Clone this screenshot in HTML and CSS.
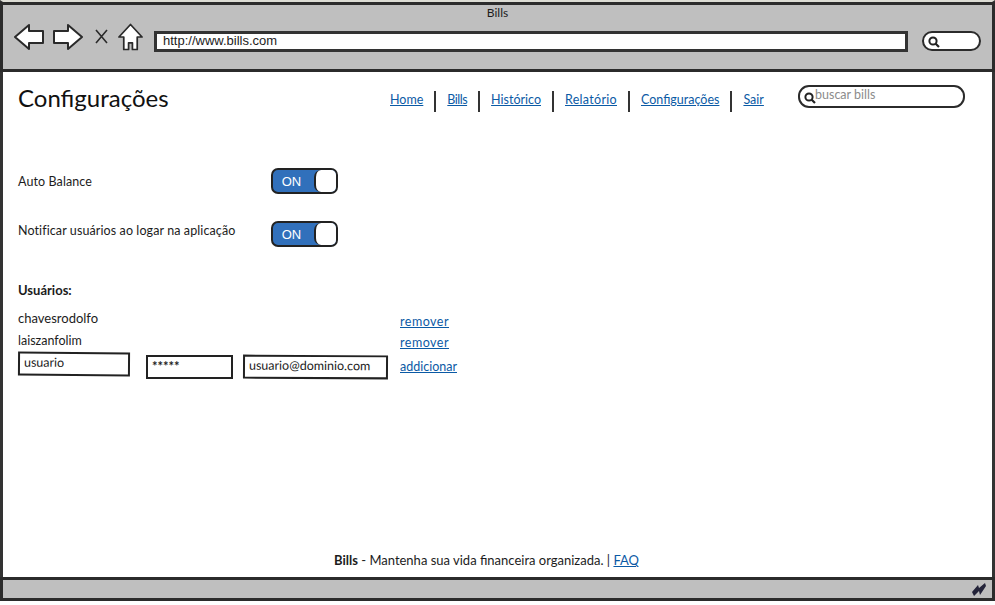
FILE: index.html
```html
<!DOCTYPE html>
<html lang="pt">
<head>
  <meta charset="UTF-8">
  <title>Bills</title>
  <meta name="viewport" content="width=device-width,initial-scale=1">
  <link rel="stylesheet" href="styles.css">
</head>
<body>
  <div class="window">
    <div class="chrome">
      <div class="chrome-title">Bills</div>
      <div class="chrome-tools">
        <svg class="nav-icon" width="30" height="28" viewBox="0 0 30 28">
          <path d="M1 14 L15 2 L15 8 L29 8 L29 20 L15 20 L15 26 Z" fill="#fff" stroke="#2a2a2a" stroke-width="2" stroke-linejoin="round"/>
        </svg>
        <svg class="nav-icon forward" width="30" height="28" viewBox="0 0 30 28">
          <path d="M29 14 L15 2 L15 8 L1 8 L1 20 L15 20 L15 26 Z" fill="#fff" stroke="#2a2a2a" stroke-width="2" stroke-linejoin="round"/>
        </svg>
        <svg class="stop-icon" width="13" height="15" viewBox="0 0 13 15">
          <path d="M1 1 L12 14 M12 1 L1 14" fill="none" stroke="#2a2a2a" stroke-width="1.6"/>
        </svg>
        <svg class="home-icon" width="25" height="28" viewBox="0 0 26 28">
          <path d="M13 1 L25 14 L20 14 L20 27 L15 27 L15 20 L11 20 L11 27 L6 27 L6 14 L1 14 Z" fill="#fff" stroke="#2a2a2a" stroke-width="1.8" stroke-linejoin="round"/>
        </svg>
        <div class="url-bar">http://www.bills.com</div>
        <div class="chrome-search">
          <svg width="12" height="12" viewBox="0 0 12 12">
            <circle cx="5" cy="5" r="3.6" fill="none" stroke="#222" stroke-width="2"/>
            <path d="M7.5 7.5 L11 11" stroke="#222" stroke-width="2.2"/>
          </svg>
        </div>
      </div>
    </div>

    <div class="content">
      <header class="page-head">
        <h1>Configurações</h1>
        <nav class="main-nav">
          <a href="#">Home</a>
          <a href="#" class="tight">Bills</a>
          <a href="#">Histórico</a>
          <a href="#" class="wide">Relatório</a>
          <a href="#">Configurações</a>
          <a href="#">Sair</a>
        </nav>
        <div class="search-box">
          <svg width="12" height="12" viewBox="0 0 12 12">
            <circle cx="5" cy="5" r="3.6" fill="none" stroke="#222" stroke-width="2"/>
            <path d="M7.5 7.5 L11 11" stroke="#222" stroke-width="2.2"/>
          </svg>
          <span>buscar bills</span>
        </div>
      </header>

      <div class="setting first">
        <span class="setting-label">Auto Balance</span>
        <div class="toggle"><span class="toggle-on">ON</span><span class="toggle-off"></span></div>
      </div>
      <div class="setting second">
        <span class="setting-label up">Notificar usuários ao logar na aplicação</span>
        <div class="toggle"><span class="toggle-on">ON</span><span class="toggle-off"></span></div>
      </div>

      <h2 class="users-title">Usuários:</h2>

      <div class="user-row one">
        <span class="user-name">chavesrodolfo</span>
        <a href="#">remover</a>
      </div>
      <div class="user-row two">
        <span class="user-name">laiszanfolim</span>
        <a href="#">remover</a>
      </div>
      <div class="add-row">
        <div class="field field-user">usuario</div>
        <div class="field field-pass">*****</div>
        <div class="field field-mail">usuario@dominio.com</div>
        <a href="#">addicionar</a>
      </div>

      <footer class="page-foot">
        <b>Bills</b> - Mantenha sua vida financeira organizada. | <a href="#">FAQ</a>
      </footer>
    </div>

    <div class="status-bar">
      <svg width="16" height="15" viewBox="0 0 16 15">
        <path d="M1 10 L7 3 L8 6 L14 1 L15 4 L9 13 L8 9 L3 14 Z" fill="#24243a"/>
      </svg>
    </div>
  </div>
</body>
</html>
```

FILE: styles.css
```css
* { box-sizing: border-box; }
html, body { height: 100%; }
body {
  margin: 0;
  background: #fff;
  color: #1c1c1c;
  font-family: "Lato", "Open Sans", sans-serif;
  font-size: 13px;
  overflow: hidden;
}
a { color: #0b5aa5; text-decoration: underline; }

.window {
  width: 995px;
  height: 601px;
  display: flex;
  flex-direction: column;
  border-top: 2px solid #dcdcd4;
  border-left: 3px solid #333;
  border-right: 3px solid #333;
}

/* browser bar */
.chrome {
  height: 70px;
  margin: 0 -3px;
  padding: 0 11px;
  background: #bfbfbf;
  border: 3px solid #2b2b2b;
}
.chrome-title { text-align: center; font-size: 12px; line-height: 15px; height: 15px; }
.chrome-tools { display: flex; align-items: flex-start; margin-top: 3px; }
.forward { margin-left: 9px; }
.stop-icon { margin: 6px 0 0 12px; }
.home-icon { margin-left: 10px; }
.url-bar {
  width: 754px;
  height: 21px;
  margin: 8px 0 0 11px;
  padding-left: 6px;
  background: #fff;
  border: 3px solid #333;
  font-family: "Liberation Sans", sans-serif;
  font-size: 13px;
  line-height: 13px;
}
.chrome-search {
  width: 59px;
  height: 20px;
  margin: 8px 0 0 14px;
  padding: 3px 0 0 4px;
  background: #fff;
  border: 2px solid #2b2b2b;
  border-radius: 10px;
}
.chrome-search svg { display: block; }

/* page */
.content { flex: 1; display: flex; flex-direction: column; padding: 0 15px; background: #fff; }
.page-head { display: flex; align-items: flex-start; height: 90px; }
h1 { margin: 11px 0 0; width: 372px; font-size: 24px; line-height: 30px; font-weight: 400; color: #111; }
.main-nav { display: flex; margin-top: 19px; width: 408px; }
.main-nav a {
  height: 21px;
  line-height: 17px;
  padding: 0 11px;
  border-right: 2px solid #333;
  font-size: 12.5px;
}
.main-nav a:first-child { padding-left: 0; }
.main-nav a:last-child { border-right: 0; }
.main-nav a.tight { letter-spacing: -0.5px; }
.main-nav a.wide { letter-spacing: 0.3px; }
.search-box {
  display: flex;
  align-items: flex-start;
  width: 167px;
  height: 23px;
  margin-top: 13px;
  padding-left: 4px;
  border: 2px solid #2b2b2b;
  border-radius: 11px;
  color: #8c8c8c;
  font-size: 12.5px;
  line-height: 16px;
}
.search-box svg { margin: 5px -1px 0 0; flex: none; }

.setting { display: flex; align-items: flex-start; height: 26px; font-size: 12.5px; letter-spacing: 0.1px; }
.setting.first { margin-top: 6px; }
.setting.second { margin-top: 27px; }
.setting-label { width: 253px; line-height: 28px; }
.setting-label.up { line-height: 20px; }
.toggle {
  display: flex;
  width: 67px;
  height: 26px;
  background: #3170bb;
  border: 2px solid #222;
  border-radius: 7px;
  overflow: hidden;
}
.toggle-on {
  width: 41px;
  padding-right: 4px;
  color: #fff;
  text-align: center;
  font-family: "Liberation Sans", sans-serif;
  font-size: 13px;
  line-height: 23px;
}
.toggle-off {
  flex: 1;
  background: #fff;
  border-left: 2px solid #222;
  border-radius: 7px 0 0 7px;
}

.users-title { margin: 34px 0 0; height: 18px; font-size: 13px; line-height: 18px; font-weight: 700; }
.user-row { display: flex; height: 21px; }
.user-row.one { margin-top: 11px; }
.user-name { width: 382px; line-height: 17px; }
.user-row.two .user-name { line-height: 19px; font-size: 12.5px; }
.user-row a { font-size: 12.5px; line-height: 23px; letter-spacing: 0.5px; }
.add-row { display: flex; align-items: flex-start; height: 28px; font-size: 12.5px; }
.field {
  height: 24px;
  margin-top: 3px;
  padding-left: 4px;
  background: #fff;
  border: 2px solid #222;
  line-height: 18px;
}
.field-user { width: 112px; margin-top: 0; transform: rotate(0.4deg); }
.field-pass { width: 87px; margin-left: 16px; font-weight: 700; font-size: 13px; }
.field-mail { width: 145px; margin-left: 10px; transform: rotate(0.3deg); }
.add-row a { margin: 7px 0 0 12px; }

.page-foot { margin-top: auto; padding: 0 22px 8px 0; text-align: center; line-height: 18px; }

.status-bar {
  height: 24px;
  margin: 0 -3px;
  padding: 2px 5px 0 0;
  display: flex;
  justify-content: flex-end;
  background: #bfbfbf;
  border: 3px solid #2b2b2b;
}
```
